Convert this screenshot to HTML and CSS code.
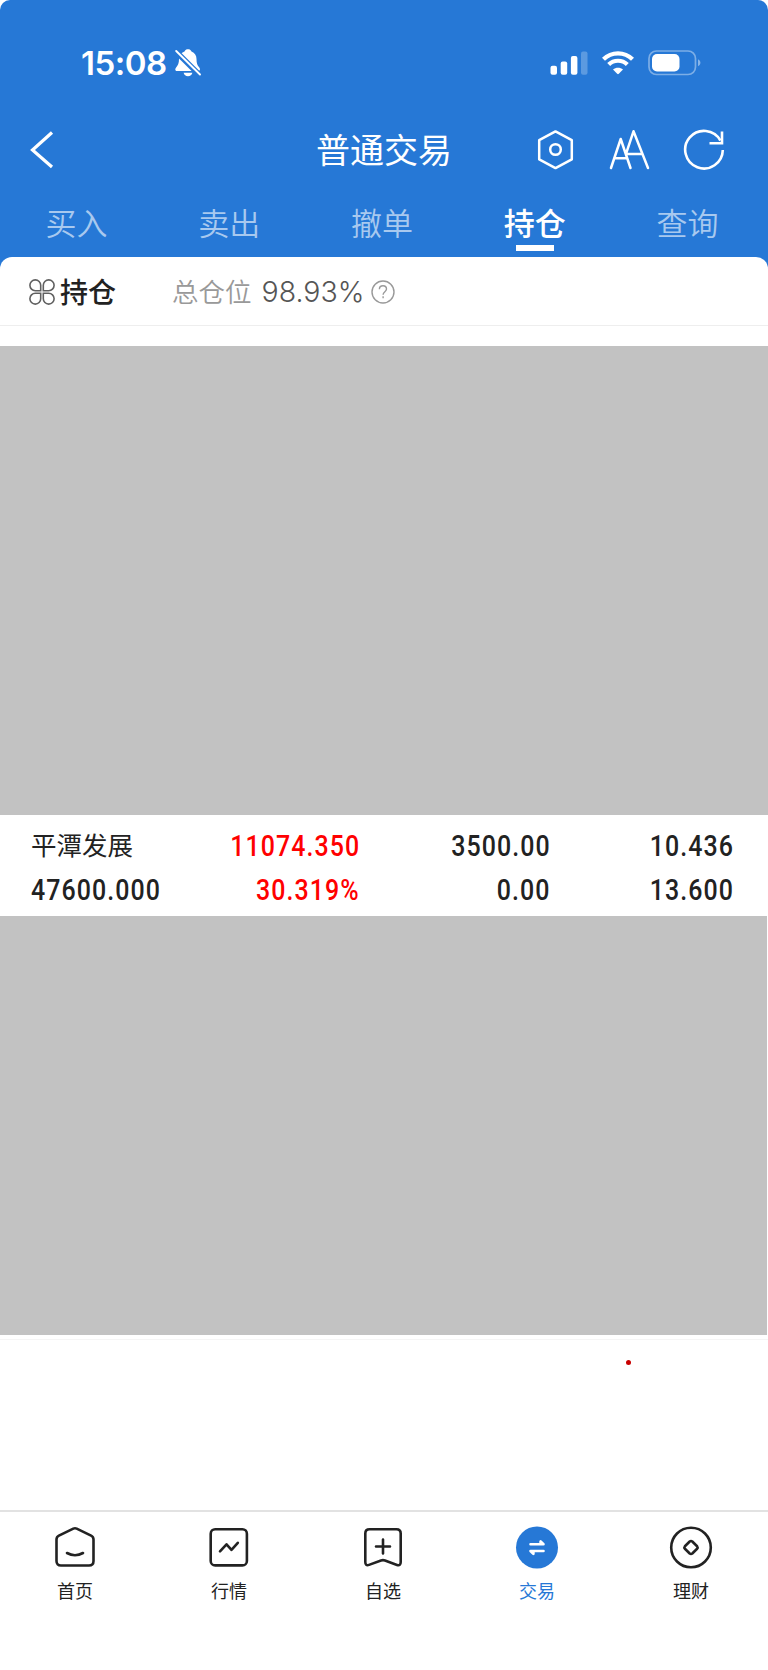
FILE: index.html
```html
<!DOCTYPE html>
<html lang="zh-CN">
<head>
<meta charset="utf-8">
<title>普通交易</title>
<link rel="stylesheet" href="styles.css">
</head>
<body>
<div class="screen">
  <header class="header">
    <div class="status">
      <div class="status-left">
        <span class="time">15:08</span>
        <svg class="bell" width="26" height="28" viewBox="0 0 26 28">
          <path d="M9.5 2.6C10.2.9 11.5.3 13 .3s2.800.6 3.500 2.300c3.300 1.200 5 4 5 7.400 0 4 .8 6.400 2.600 8.300 1.300 1.400 1.300 3.700-.9 3.700H1.900c-2 0-2-2.100-.8-3.500C3 16.300 4 14 4 10c0-3.400 2-6.200 5.500-7.400z" fill="#fff"/>
          <path d="M8.600 23.700h8.800c-.5 2.200-2.200 3.600-4.400 3.600s-3.900-1.400-4.400-3.600z" fill="#fff"/>
          <path d="M-.5 1 26 27.500" stroke="#2678d6" stroke-width="5.500"/>
          <path d="M1.200 2 25 25.500" stroke="#fff" stroke-width="1.900" stroke-linecap="round"/>
        </svg>
      </div>
      <div class="status-right">
        <svg width="38" height="24" viewBox="0 0 38 24" fill="#fff">
          <rect x="0.500" y="14.800" width="6.500" height="9" rx="2"/>
          <rect x="10.700" y="10.500" width="6.500" height="13.300" rx="2"/>
          <rect x="20.900" y="5" width="6.500" height="18.800" rx="2"/>
          <rect x="31" y="0.500" width="6.500" height="23.300" rx="2" opacity=".25"/>
        </svg>
        <svg width="32" height="24" viewBox="0 0 32 24" fill="none" stroke="#fff">
          <path d="M1.500 8.300a20.500 20.500 0 0 1 29 0" stroke-width="4.200"/>
          <path d="M6.700 13.600a13.200 13.200 0 0 1 18.600 0" stroke-width="4.200"/>
          <path d="M11 18.500c2.800-2.500 7.200-2.500 10 0l-4.200 4.300q-.8.700-1.600 0z" fill="#fff" stroke="none"/>
        </svg>
        <svg width="53" height="26" viewBox="0 0 53 26">
          <rect x="1" y="1" width="46.500" height="23.500" rx="7.500" fill="none" stroke="#fff" stroke-opacity=".4" stroke-width="1.700"/>
          <rect x="4" y="4" width="27.500" height="17.500" rx="5" fill="#fff"/>
          <path d="M50 9.300c3.200 1.400 3.200 5.600 0 7z" fill="#fff" opacity=".45"/>
        </svg>
      </div>
    </div>
    <div class="titlebar">
      <svg class="back" width="25" height="40" viewBox="0 0 25 40"><path d="M22 2.500 2.500 20 22 37" fill="none" stroke="#fff" stroke-width="3.200"/></svg>
      <h1 class="title">普通交易</h1>
      <div class="actions">
        <svg width="40" height="42" viewBox="0 0 40 42" fill="none" stroke="#fff" stroke-width="2.500" stroke-linejoin="round">
          <path d="M20.500 2.400 36.800 11.200V30.300L20.500 39.100 4.200 30.300V11.200z"/><circle cx="20.500" cy="20.500" r="5.300"/>
        </svg>
        <svg width="42" height="42" viewBox="0 0 42 42" fill="none" stroke="#fff" stroke-width="2.500" stroke-linecap="round" stroke-linejoin="round">
          <path d="M3 39 12.700 10l9.800 29M6.900 29.300H18M18 24.800 25.500 2.300 40 39M19 25H34.500"/>
        </svg>
        <svg width="42" height="42" viewBox="0 0 42 42" fill="none" stroke="#fff" stroke-width="2.600">
          <path d="M39.800 21A18.800 18.800 0 1 1 37.400 11.500"/><path d="M39 2.500v11.800H26.500"/>
        </svg>
      </div>
    </div>
    <nav class="tabs">
      <span class="tab">买入</span><span class="tab">卖出</span><span class="tab">撤单</span><span class="tab active">持仓</span><span class="tab">查询</span>
    </nav>
  </header>
  <main class="content">
    <section class="summary">
      <svg class="clover" width="26" height="26" viewBox="0 0 26 26" fill="none" stroke="#606060" stroke-width="1.600">
        <path d="M11.700 11.700V6.300A5.400 5.400 0 1 0 6.300 11.700zM14.300 11.700V6.300a5.400 5.400 0 1 1 5.400 5.400zM11.700 14.300v5.400a5.400 5.400 0 1 1-5.400-5.400zM14.300 14.300v5.400a5.400 5.400 0 1 0 5.400-5.400z"/>
      </svg>
      <strong class="summary-title">持仓</strong>
      <span class="summary-label">总仓位</span>
      <span class="summary-value">98.93%</span>
      <svg class="help" width="24" height="24" viewBox="0 0 24 24" fill="none" stroke="#999" stroke-width="1.400">
        <circle cx="12" cy="12" r="11"/><path d="M8.400 9.300c0-2.200 1.500-3.500 3.600-3.500s3.500 1.400 3.500 3.200c0 2.600-3.400 2.800-3.400 5.700"/><path d="M12.100 16.300v1.900"/>
      </svg>
    </section>
    <div class="mask mask-top"></div>
    <section class="holding">
      <div class="cell first"><span class="name">平潭发展</span><span class="num">47600.000</span></div>
      <div class="cell gain"><span class="num">11074.350</span><span class="num">30.319%</span></div>
      <div class="cell"><span class="num">3500.00</span><span class="num">0.00</span></div>
      <div class="cell"><span class="num">10.436</span><span class="num">13.600</span></div>
    </section>
    <div class="mask mask-bottom"></div>
    <div class="rest"><i class="dot"></i></div>
  </main>
  <footer class="nav">
    <div class="nav-item">
      <svg width="44" height="44" viewBox="0 0 44 44"><path d="M20.300 3.600q1.700-.8 3.400 0l14.400 7q2.400 1.200 2.400 3.800V36q0 4.500-4.500 4.500H8Q3.500 40.500 3.500 36V14.400q0-2.600 2.400-3.800z"/><path d="M14 28q8 4.600 16 0"/></svg>
      <span>首页</span>
    </div>
    <div class="nav-item">
      <svg width="44" height="44" viewBox="0 0 44 44"><rect x="3.700" y="4.200" width="36.200" height="36.200" rx="4.500"/><path d="m13 26.300 6.500-7 5 5.500 6.300-7"/></svg>
      <span>行情</span>
    </div>
    <div class="nav-item">
      <svg width="44" height="44" viewBox="0 0 44 44"><path d="M8.500 4.200h27q4.200 0 4.200 4.200V37q0 4.200-3.700 2.900L24 35.500q-2-.7-4 0L8 39.900Q4.300 41.200 4.300 37V8.400q0-4.200 4.200-4.200zM22 14.500v14M15 21.500h14"/></svg>
      <span>自选</span>
    </div>
    <div class="nav-item current">
      <svg width="44" height="44" viewBox="0 0 44 44"><circle cx="22" cy="22.500" r="21" fill="#2678d6" stroke="none"/><path class="arrows" d="M15.500 19.200H28.500L25.600 16.300V19M28.500 26H15.500L18.400 28.900V26.200"/></svg>
      <span>交易</span>
    </div>
    <div class="nav-item">
      <svg width="44" height="44" viewBox="0 0 44 44"><circle cx="22" cy="22.500" r="19.800"/><path d="M20.700 16.500q1.300-1 2.600 0l4.800 4.700q1 1.300 0 2.600l-4.800 4.700q-1.300 1-2.600 0l-4.800-4.700q-1-1.300 0-2.600z"/></svg>
      <span>理财</span>
    </div>
  </footer>
</div>
</body>
</html>
```
FILE: styles.css
```css
* { box-sizing: border-box; }
body {
  margin: 0;
  background: #fff;
  color: #222;
  font-family: "Liberation Sans", "Noto Sans CJK SC", sans-serif;
}
svg { display: block; flex: none; }
.screen {
  width: 768px;
  height: 1670px;
  display: flex;
  flex-direction: column;
  overflow: hidden;
}
.header {
  height: 269px;
  flex: none;
  background: #2678d6;
  border-radius: 10px 10px 0 0;
  color: #fff;
}
.status {
  height: 112px;
  padding: 13px 67px 0 81px;
  display: flex;
  justify-content: space-between;
  align-items: center;
}
.status-left { display: flex; align-items: center; gap: 8px; }
.time {
  font: 600 33px/40px Inter, sans-serif;
  width: 86px;
  letter-spacing: -.5px;
}
.status-right { display: flex; align-items: center; gap: 14px; }
.titlebar {
  height: 76px;
  padding: 0 43px 0 30px;
  display: grid;
  grid-template-columns: 286px 1fr auto;
  align-items: center;
}
.title {
  margin: -3px 0 0;
  font: 400 34px/50px "Noto Sans CJK SC", sans-serif;
}
.actions { display: flex; justify-content: flex-end; gap: 33px; }
.tabs { display: flex; height: 69px; padding-right: 4px; }
.tab {
  flex: 1;
  display: flex;
  flex-direction: column;
  align-items: center;
  font: 350 31px/67px "Noto Sans CJK SC", sans-serif;
  color: #a8c9ef;
}
.tab.active { color: #fff; font-weight: 500; }
.tab.active::after {
  content: "";
  width: 38px;
  height: 6px;
  margin-top: -10px;
  background: #fff;
}
.content {
  flex: 1;
  margin-top: -12px;
  background: #fff;
  border-radius: 12px 12px 0 0;
  display: flex;
  flex-direction: column;
}
.summary {
  height: 69px;
  margin-bottom: 20px;
  padding: 1px 29px 0;
  border-bottom: 1px solid #eee;
  display: flex;
  align-items: center;
}
.summary-title { font: 500 28px/40px "Noto Sans CJK SC", sans-serif; margin: -2px 0 0 5px; }
.summary-label { font: 350 26.500px/40px "Noto Sans CJK SC", sans-serif; color: #999; margin: -2px 0 0 56px; }
.summary-value { font: 300 28.500px/40px Inter, sans-serif; color: #555; margin-left: 10px; }
.help { margin-left: 7px; }
.mask { background: #c2c2c2; flex: none; }
.mask-top { height: 469px; }
.mask-bottom { height: 419px; margin-right: 1px; }
.holding {
  height: 101px;
  flex: none;
  padding: 9px 35px 4px 31px;
  display: grid;
  grid-template-columns: 137px 191px 191px 183px;
}
.cell {
  display: grid;
  grid-template-rows: 44px 44px;
  justify-items: end;
  line-height: 44px;
}
.cell.first { justify-items: start; }
.name { font: 400 25.500px/40px "Noto Sans CJK SC", sans-serif; }
.num {
  font-family: Roboto, sans-serif;
  font-size: 29px;
  font-weight: 500;
  letter-spacing: 1.250px;
  margin-right: -1px;
  transform: scaleX(.86);
  transform-origin: right;
}
.first .num { transform-origin: left; }
.gain { color: #f00; }
.rest { margin-top: 4px; border-top: 1px solid #f5f5f5; flex: 1; }
.dot {
  display: block;
  width: 5px;
  height: 5px;
  margin: 20px 0 0 626px;
  border-radius: 50%;
  background: #c90000;
}
.nav {
  height: 160px;
  flex: none;
  margin-left: -2px;
  border-top: 2px solid #e2e2e2;
  padding-top: 13px;
  display: flex;
}
.nav-item {
  flex: 1;
  display: flex;
  flex-direction: column;
  align-items: center;
  font: 400 18px/26px "Noto Sans CJK SC", sans-serif;
  gap: 8px;
}
.nav-item svg {
  fill: none;
  stroke: #222;
  stroke-width: 2.600;
  stroke-linecap: round;
  stroke-linejoin: round;
}
.nav-item .arrows { stroke: #fff; }
.nav-item.current { color: #2678d6; }
```
